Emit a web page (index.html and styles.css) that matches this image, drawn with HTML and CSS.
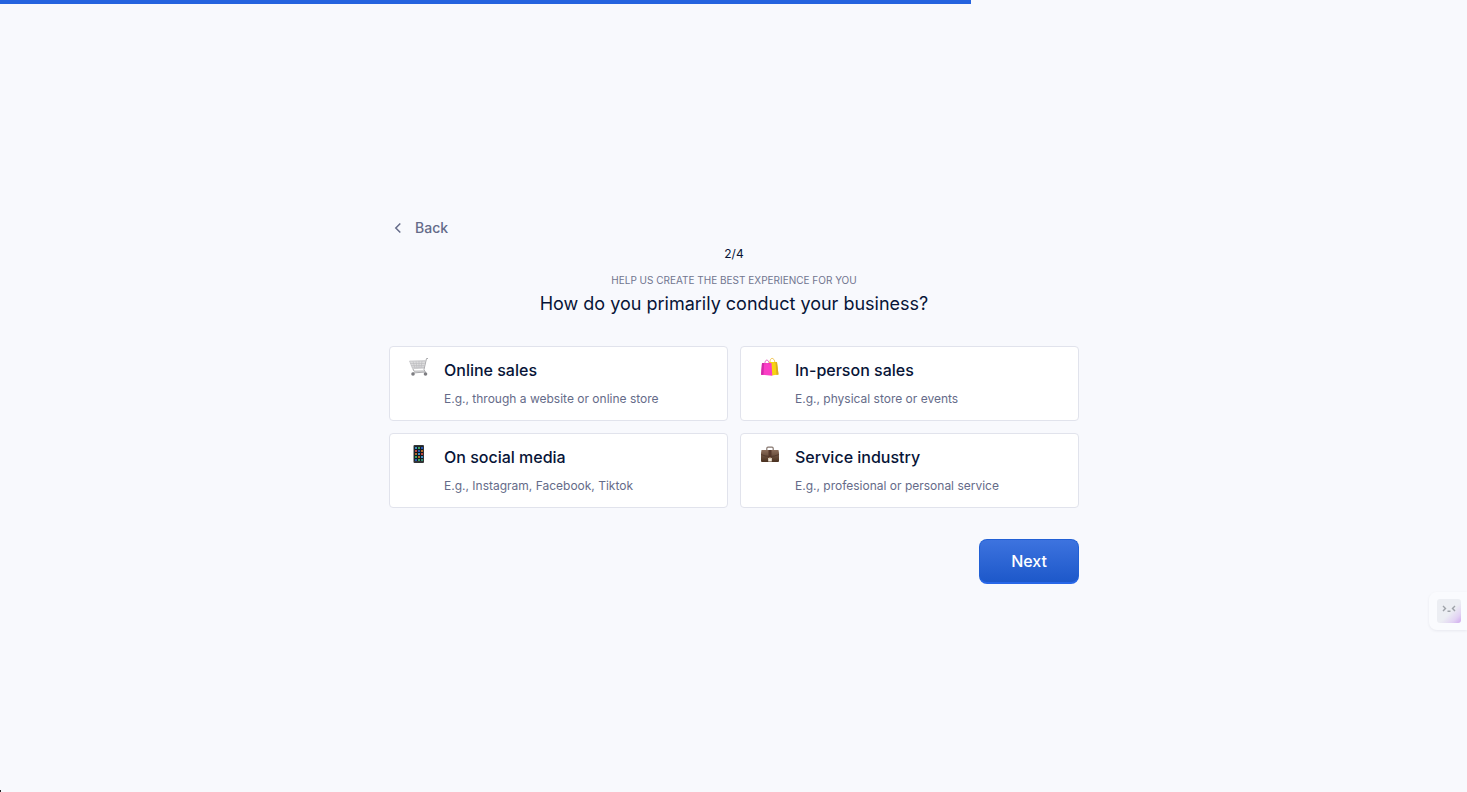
FILE: index.html
```html
<!DOCTYPE html>
<html lang="en">
<head>
<meta charset="utf-8">
<meta name="viewport" content="width=device-width, initial-scale=1">
<title>Getting started</title>
<link rel="stylesheet" href="styles.css">
</head>
<body>
<div class="progress" role="progressbar" aria-label="Setup progress" aria-valuemin="0" aria-valuemax="100" aria-valuenow="66"><div class="progress-fill" style="width:66.2%"></div></div>
<main class="page">
  <form class="step">
    <button type="button" class="back">
      <svg class="back-icon" viewBox="0 0 18 18" aria-hidden="true"><path d="M11.3 4.5 6.800 9l4.5 4.5" fill="none" stroke="currentColor" stroke-width="1.5"/></svg>
      Back
    </button>
    <header class="intro">
      <p class="count">2/4</p>
      <p class="eyebrow">HELP US CREATE THE BEST EXPERIENCE FOR YOU</p>
      <h1 class="title">How do you primarily conduct your business?</h1>
    </header>
    <div class="options">
      <button type="button" class="option">
        <svg class="emoji" viewBox="0 0 20 20" aria-hidden="true">
          <path d="M.5 4 16.5 3 15 11 3.500 11.700Z" fill="#dcdcdd"/>
          <path d="M.5 4 16.400 4M1.200 6.500h14.500M2 8.500h13.400M3 10.200h12M3.500 11.700l11.500-.5M.5 4l3 7.700M4 4.400l2 7M7 4.300l1 7M10 4v7M13 4l-1 7" fill="none" stroke="#bababd" stroke-width=".6"/>
          <path d="M19 1.500h-1.500L15 12.500l1.500 3M4 12l1 2.200 10.500-.2M3.500 16l13-1" fill="none" stroke="#ababae" stroke-width="1"/>
          <circle cx="4" cy="17" r="1.800" fill="#7d7d81"/><circle cx="16.500" cy="17" r="1.800" fill="#7d7d81"/>
        </svg>
        <span class="option-text"><span class="option-name">Online sales</span><span class="option-hint">E.g., through a website or online store</span></span>
      </button>
      <button type="button" class="option">
        <svg class="emoji" viewBox="0 0 20 20" aria-hidden="true">
          <path d="M9 5h8l1.500 12.500-7 1Z" fill="#f8d313"/>
          <path d="m15.500 5 1.500.2 1.500 12.300-2 .5Z" fill="#dbac22"/>
          <path d="M10 5c0-5 4.500-5 5 1" fill="none" stroke="#edb21a" stroke-width=".7"/>
          <path d="M2 6h9.500l.8 12.700L1 17.700Z" fill="#fa3ec5"/>
          <path d="m2 6 2 .1-.5 11.800-2.500-.2Z" fill="#d22aa8"/>
          <path d="M4.800 7.500c0-6 4-6 4.400 0" fill="none" stroke="#d933ad" stroke-width=".7"/>
        </svg>
        <span class="option-text"><span class="option-name">In-person sales</span><span class="option-hint">E.g., physical store or events</span></span>
      </button>
      <button type="button" class="option">
        <svg class="emoji" viewBox="0 0 20 20" aria-hidden="true">
          <rect x="4.500" y="1" width="10.500" height="18" rx="1" fill="#333536"/>
          <rect x="5.500" y="2.500" width="8.500" height="14.500" fill="#111820"/>
          <g stroke-width="2">
            <path d="M6 4h2M9 10h2M12 13h2" stroke="#3f8fc5"/>
            <path d="M9 4h2M6 13h2M9 16h2" stroke="#3ba55c"/>
            <path d="M12 4h2M9 7h2M6 16h2" stroke="#2456b5"/>
            <path d="M6 7h2M12 10h2" stroke="#bd4540"/>
            <path d="M12 7h2M6 10h2M9 13h2" stroke="#b46a29"/>
            <path d="M12 16h2" stroke="#348d70"/>
          </g>
        </svg>
        <span class="option-text"><span class="option-name">On social media</span><span class="option-hint">E.g., Instagram, Facebook, Tiktok</span></span>
      </button>
      <button type="button" class="option">
        <svg class="emoji" viewBox="0 0 20 20" aria-hidden="true">
          <defs><linearGradient id="leather" x1="0" y1="0" x2="0" y2="1"><stop stop-color="#8b6c59"/><stop offset="1" stop-color="#49301f"/></linearGradient></defs>
          <path d="M6.800 6V4.500Q6.800 3.200 8 3.200h4q1.200 0 1.200 1.300V6" fill="none" stroke="#85766f" stroke-width="1.200"/>
          <path d="M1.500 6h17l.5 3v8q0 1-1 1H2q-1 0-1-1V9Z" fill="url(#leather)"/>
          <path d="M1 10.500q9 4 18 0" fill="none" stroke="#4b3226" stroke-width=".7"/>
          <path d="M8.500 6h3v7h-3Z" fill="#55372a"/>
          <path d="M8.200 14h3.600v3.500H8.200Z" fill="#f4eadb"/>
          <path d="M9.300 13h1.400v1.500H9.300Z" fill="#a98768"/>
        </svg>
        <span class="option-text"><span class="option-name">Service industry</span><span class="option-hint">E.g., profesional or personal service</span></span>
      </button>
    </div>
    <button type="submit" class="next">Next</button>
  </form>
</main>
<button type="button" class="helper" aria-label="Open assistant">
  <svg class="helper-face" viewBox="0 0 24 24" aria-hidden="true">
    <defs><linearGradient id="face" x1="0" y1="0" x2="1" y2="1"><stop offset=".55" stop-color="#eceef3"/><stop offset=".8" stop-color="#e2d3f3"/><stop offset="1" stop-color="#cfa8ee"/></linearGradient></defs>
    <rect width="24" height="24" rx="3" fill="url(#face)"/>
    <path d="m6 7 2.500 2.400L6 12M18 7l-2.500 2.400L18 12M10.500 12.200h3" fill="none" stroke="#9fa3a9" stroke-width="1.400"/>
  </svg>
</button>
<div class="corner"></div>
</body>
</html>
```
FILE: styles.css
```css
* { box-sizing: border-box; }
body { margin: 0; background: #f8f9fd; color: #071437; font-family: Inter, sans-serif; }
button { font: inherit; color: inherit; cursor: pointer; }
p, h1 { margin: 0; font-weight: 400; }
.progress { position: fixed; top: 0; left: 0; right: 0; height: 4px; }
.progress-fill { height: 100%; background: #2563df; }
.page { min-height: 100vh; display: flex; flex-direction: column; justify-content: center; align-items: center; padding: 24px 16px 16px 17px; }
.step { width: 100%; max-width: 690px; display: flex; flex-direction: column; }
.back { align-self: flex-start; display: flex; align-items: center; gap: 8px; padding: 0; border: 0; background: none; color: #656b89; font-size: 14px; font-weight: 500; line-height: 24px; }
.back-icon { width: 18px; height: 18px; }
.intro { text-align: center; }
.count { margin-top: 4px; font-size: 12px; line-height: 20px; }
.eyebrow { margin-top: 8px; color: #70758f; font-size: 10px; line-height: 16px; }
.title { font-size: 18px; line-height: 32px; }
.options { display: grid; grid-template-columns: repeat(auto-fit, minmax(280px, 1fr)); gap: 12px; margin-top: 26px; }
.option { display: flex; align-items: flex-start; gap: 15px; padding: 10px 19px 11px; border: 1px solid #e1e3ec; border-radius: 4px; background: #fff; text-align: left; }
.emoji { flex: none; width: 20px; height: 20px; }
.option-text { display: flex; flex-direction: column; gap: 6px; }
.option-name { font-size: 16px; font-weight: 500; line-height: 26px; }
.option-hint { color: #656b89; font-size: 12px; line-height: 20px; }
.next { align-self: flex-end; margin-top: 31px; padding: 10px 31px; border: 1px solid #2160d5; border-bottom: 2px solid #2867e8; border-radius: 8px; background: linear-gradient(#3d73df, #1d58ca); color: #fff; font-size: 16px; font-weight: 500; line-height: 22px; }
.helper { position: fixed; right: 0; top: 592px; display: flex; padding: 7px 6px 7px 8px; border: 0; border-radius: 8px 0 0 8px; background: #fafbfe; box-shadow: 0 1px 3px #0b143712; }
.helper-face { width: 24px; height: 24px; }
.corner { position: fixed; left: 0; bottom: 0; width: 1px; height: 2px; background: #222; }
```
